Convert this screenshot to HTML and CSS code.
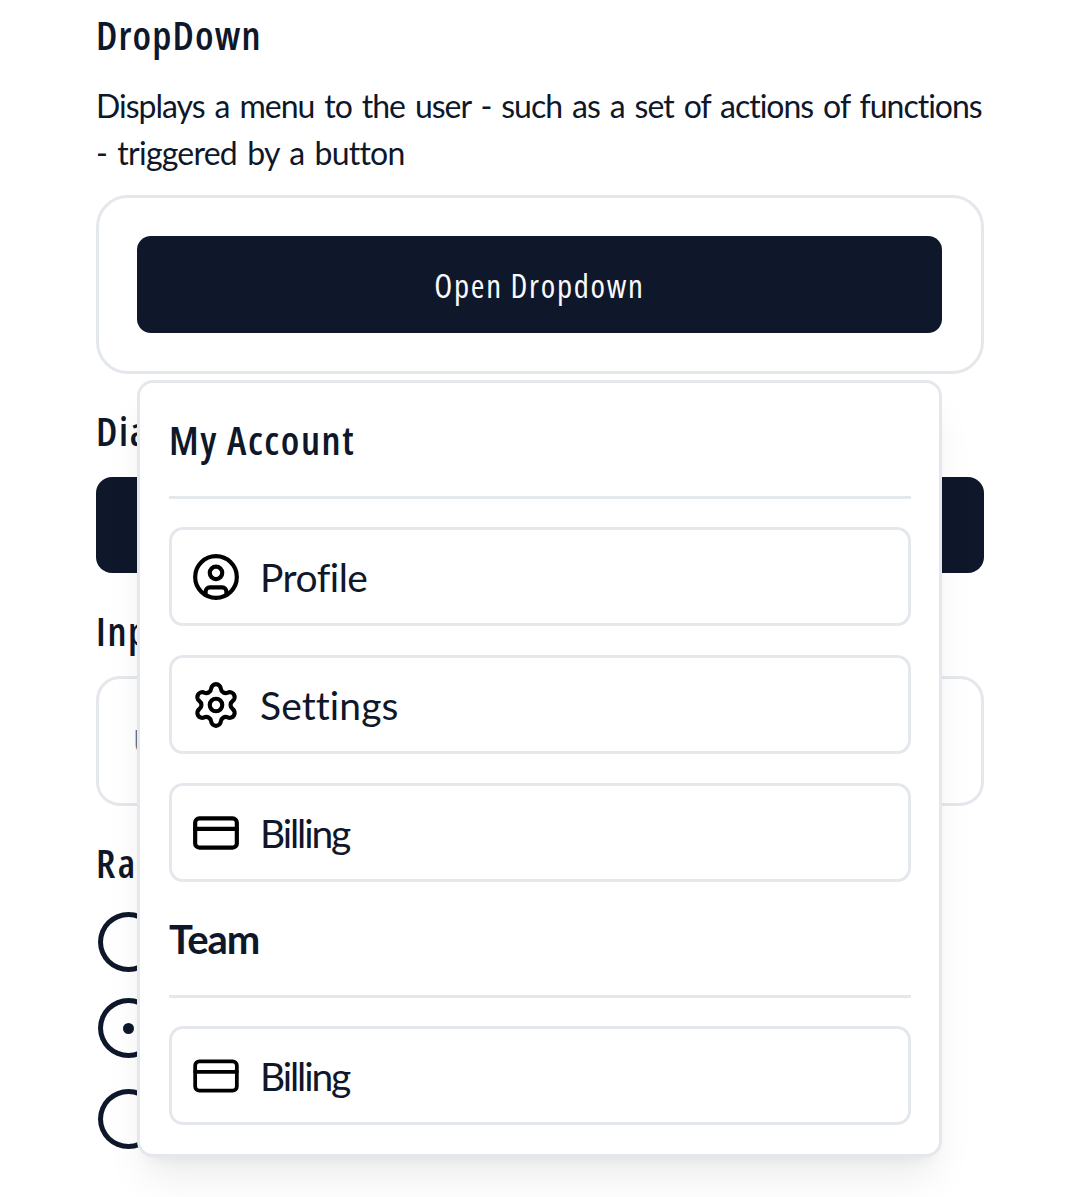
FILE: index.html
```html
<!DOCTYPE html>
<html lang="en">
<head>
<meta charset="utf-8">
<title>Components</title>
<link rel="stylesheet" href="styles.css">
</head>
<body>
<main class="page">
  <h2 class="heading first">DropDown</h2>
  <p class="description">Displays a menu to the user - such as a set of actions of functions<br><span class="second-line">- triggered by a button</span></p>
  <section class="card">
    <button class="button">Open Dropdown</button>
    <div class="menu">
      <h3 class="menu-label">My Account</h3>
      <hr class="separator">
      <div class="menu-item profile">
        <svg class="icon" viewBox="0 0 24 24"><circle cx="12" cy="12" r="10"/><circle cx="12" cy="10" r="3"/><path d="M7 20.662V19a2 2 0 0 1 2-2h6a2 2 0 0 1 2 2v1.662"/></svg>
        <span>Profile</span>
      </div>
      <div class="menu-item settings">
        <svg class="icon" viewBox="0 0 24 24"><path d="M9.671 4.136a2.34 2.34 0 0 1 4.659 0 2.34 2.34 0 0 0 3.319 1.915 2.34 2.34 0 0 1 2.33 4.033 2.34 2.34 0 0 0 0 3.831 2.34 2.34 0 0 1-2.33 4.033 2.34 2.34 0 0 0-3.319 1.915 2.34 2.34 0 0 1-4.659 0 2.34 2.34 0 0 0-3.32-1.915 2.34 2.34 0 0 1-2.33-4.033 2.34 2.34 0 0 0 0-3.831A2.34 2.34 0 0 1 6.35 6.051a2.34 2.34 0 0 0 3.319-1.915"/><circle cx="12" cy="12" r="3"/></svg>
        <span>Settings</span>
      </div>
      <div class="menu-item">
        <svg class="icon" viewBox="0 0 24 24"><rect x="2" y="5" width="20" height="14" rx="2"/><path d="M2 10h20"/></svg>
        <span>Billing</span>
      </div>
      <h3 class="menu-label team">Team</h3>
      <hr class="separator">
      <div class="menu-item">
        <svg class="icon thin" viewBox="0 0 24 24"><rect x="2" y="5" width="20" height="14" rx="2"/><path d="M2 10h20"/></svg>
        <span>Billing</span>
      </div>
    </div>
  </section>
  <h2 class="heading dialog">Dialog</h2>
  <button class="button wide"></button>
  <h2 class="heading input-title">Input</h2>
  <div class="input">Username</div>
  <h2 class="heading radio-title">Radio</h2>
  <div class="radios">
    <span class="radio"></span>
    <span class="radio checked"></span>
    <span class="radio last"></span>
  </div>
  <h2 class="heading slider-title">Slider</h2>
</main>
</body>
</html>
```
FILE: styles.css
```css
* { box-sizing: border-box; }

body {
  margin: 0;
  height: 1197px;
  overflow: hidden;
  background: #fff;
  color: #0f172a;
  font-family: Lato, "Open Sans", sans-serif;
}

.page { padding: 7px 96px 0; }

.heading, .menu-label {
  margin: 0;
  font-family: "Open Sans", "Noto Sans", sans-serif;
  font-stretch: 75%;
  font-size: 40px;
  line-height: 56px;
  font-weight: 600;
  letter-spacing: 1.6px;
  white-space: nowrap;
}

.heading.first { letter-spacing: 1.1px; }

.description {
  margin: 19px 0 0;
  font-size: 32px;
  line-height: 47px;
  letter-spacing: -1px;
  word-spacing: 2.75px;
  white-space: nowrap;
}

.second-line { letter-spacing: -0.75px; }

.card {
  position: relative;
  height: 179px;
  margin-top: 19px;
  padding: 38px 39px 38px 38px;
  border: 3px solid #e4e8ec;
  border-radius: 32px;
}

.button {
  display: block;
  width: 100%;
  height: 97px;
  padding: 2px 0 0;
  border: 0;
  border-radius: 14px;
  background: #0f172a;
  color: #f8fafc;
  font-family: "Open Sans", "Noto Sans", sans-serif;
  font-stretch: 75%;
  font-size: 33px;
  letter-spacing: 1.7px;
}

.menu {
  position: absolute;
  z-index: 10;
  top: 182px;
  left: 38px;
  right: 39px;
  height: 777px;
  padding: 29px 28px 29px 29px;
  border: 3px solid #e4e8ec;
  border-radius: 16px;
  background: #fff;
  box-shadow: 0 27px 40px -8px rgba(0, 0, 0, 0.08), 0 11px 16px -11px rgba(0, 0, 0, 0.08);
}

.separator {
  height: 3px;
  margin: 28px 0;
  border: 0;
  background: #e2e8ec;
}

.menu-item {
  display: flex;
  align-items: center;
  gap: 19px;
  height: 99px;
  margin-bottom: 29px;
  padding-left: 19px;
  border: 3px solid #e4e8ec;
  border-radius: 14px;
  font-size: 39px;
  letter-spacing: -2.1px;
}

.profile { letter-spacing: -0.5px; }
.settings { letter-spacing: 0.1px; }

.team {
  font-family: Lato, sans-serif;
  font-weight: 700;
  letter-spacing: -1px;
}

.icon {
  flex: none;
  width: 50px;
  height: 50px;
  fill: none;
  stroke: #000;
  stroke-width: 2;
  stroke-linecap: round;
  stroke-linejoin: round;
}

.thin { stroke-width: 1.8; }

.dialog { margin-top: 29px; }
.wide { height: 96px; margin-top: 18px; border-radius: 16px; }
.input-title { margin-top: 30px; }

.input {
  height: 130px;
  margin-top: 17px;
  padding-left: 34px;
  border: 3px solid #e4e8ec;
  border-radius: 24px;
  color: #64748b;
  font-size: 32px;
  line-height: 126px;
}

.radio-title { margin-top: 29px; letter-spacing: 2.5px; }

.radios {
  display: flex;
  flex-direction: column;
  gap: 26px;
  margin-top: 21px;
  padding-left: 2px;
}

.radio {
  display: grid;
  place-items: center;
  width: 61px;
  height: 60px;
  border: 5px solid #0f172a;
  border-radius: 50%;
}

.radio.last { margin-top: 5px; }

.checked::after {
  content: "";
  width: 11px;
  height: 11px;
  border-radius: 50%;
  background: #0f172a;
}

.slider-title { margin-top: 34.6px; letter-spacing: 3px; }
```
